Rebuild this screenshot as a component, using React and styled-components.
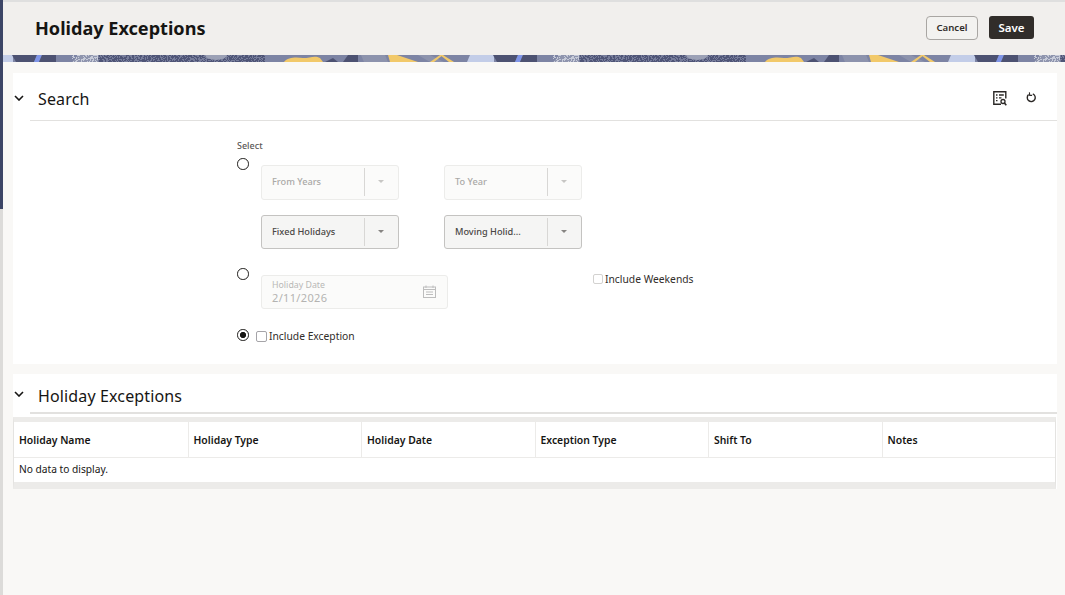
import React from 'react';
import styled, { createGlobalStyle } from 'styled-components';

const columns = ['Holiday Name', 'Holiday Type', 'Holiday Date', 'Exception Type', 'Shift To', 'Notes'];

// little speckled dots for the textured part of the banner
function speckles(from, to, color) {
    const dots = [];
    let seed = from + 7;
    for (let x = from; x < to; x++) {
        for (let y = 0; y < 7; y++) {
            seed = (seed * 1103515245 + 12345) % 2147483648;
            if (seed % 100 < 38) {
                dots.push(<rect key={x + '-' + y} x={x} y={y} width="1" height="1" fill={color} />);
            }
        }
    }
    return dots;
}

function Banner() {
    return (
        <BannerSvg height="7" width="100%">
            <defs>
                <pattern id="banner-tile" x="-3" y="0" width="481" height="7" patternUnits="userSpaceOnUse">
                    <rect width="481" height="7" fill="#7d84a4" />
                    <polygon points="470,0 481,0 481,7 467,7" fill="#c3cde8" />
                    <rect x="0" y="0" width="13" height="7" fill="#c3cde8" />
                    <polygon points="12,0 37,0 34,7 16,7" fill="#4d5272" />
                    <polygon points="37,0 42,0 39,7 34,7" fill="#7f95e8" />
                    <polygon points="42,0 56,0 56,7 39,7" fill="#4d5272" />
                    <polygon points="78,0 98,0 98,7 72,7" fill="#8f95ae" />
                    {speckles(72, 98, '#c6cad8')}
                    <rect x="98" y="0" width="167" height="7" fill="#4f5577" />
                    {speckles(98, 265, '#777d9b')}
                    <ellipse cx="216" cy="0" rx="11" ry="5" fill="#9ca1b6" />
                    <path d="M284 7 C288 2 296 2 303 3 C310 3 315 0 320 3 L323 7 Z" fill="#f2c96a" />
                    <polygon points="325,7 333,3 338,7" fill="#4d5272" />
                    <polygon points="343,7 348,0 358,0 358,7" fill="#4d5272" />
                    <polygon points="361,0 385,0 388,7 364,7" fill="#8d93ad" />
                    <polygon points="388,0 397,0 418,7 390,7" fill="#f2c96a" />
                    <polygon points="418,0 430,0 444,7 430,7" fill="#8d93ad" />
                    <polygon points="430,7 440,0 443,0 434,7" fill="#f2c96a" />
                    <polygon points="440,0 443,0 454,7 449,7" fill="#f2c96a" />
                </pattern>
            </defs>
            <rect width="100%" height="7" fill="url(#banner-tile)" />
        </BannerSvg>
    );
}

function Chevron() {
    return (
        <ChevronSvg viewBox="0 0 10 6" width="10" height="6">
            <path d="M1 1l4 4 4-4" fill="none" stroke="#161513" strokeWidth="1.6" />
        </ChevronSvg>
    );
}

function QueryIcon() {
    return (
        <svg viewBox="0 0 14 15" width="14" height="15">
            <path d="M8 13.2H0.8V0.8h12v6.7" fill="none" stroke="#2b2826" strokeWidth="1.4" />
            <path d="M3 4h1.5M6 4h4.8M3 6.8h1.5M6 6.8h2.5M3 9.6h1.5" stroke="#2b2826" strokeWidth="1.3" />
            <circle cx="10" cy="10.5" r="2" fill="none" stroke="#2b2826" strokeWidth="1.3" />
            <path d="M11.4 12l1.9 2.2" stroke="#2b2826" strokeWidth="1.6" />
        </svg>
    );
}

function ResetIcon() {
    return (
        <ResetSvg viewBox="0 0 11 11" width="11" height="11">
            <path d="M6.8 1.9A4 4 0 1 1 2.6 2.6" fill="none" stroke="#2b2826" strokeWidth="1.4" />
            <path d="M3.4 0.4l0.3 3h2.4" fill="none" stroke="#2b2826" strokeWidth="1.1" />
        </ResetSvg>
    );
}

function CalendarIcon() {
    return (
        <svg viewBox="0 0 13 13" width="13" height="13">
            <rect x="0.5" y="2" width="12" height="10.5" fill="none" stroke="#bdbdbd" />
            <path d="M0.5 4.5h12M3 0.5v2.5M10 0.5v2.5M3 7h7M3 9.5h7" stroke="#bdbdbd" />
        </svg>
    );
}

function Dropdown({ label, disabled }) {
    return (
        <SelectBox $disabled={disabled}>
            <SelectText>{label}</SelectText>
            <Caret />
        </SelectBox>
    );
}

function App() {
    return (
        <Page>
            <GlobalStyle />
            <Rail />
            <Main>
                <Header>
                    <PageTitle>Holiday Exceptions</PageTitle>
                    <Actions>
                        <CancelButton type="button">Cancel</CancelButton>
                        <SaveButton type="button">Save</SaveButton>
                    </Actions>
                </Header>
                <Banner />
                <Content>
                    <Card $height={291}>
                        <SectionHead>
                            <Chevron />
                            <SectionTitle>Search</SectionTitle>
                            <SectionTools>
                                <QueryIcon />
                                <ResetIcon />
                            </SectionTools>
                        </SectionHead>
                        <SearchForm>
                            <SelectLabel>Select</SelectLabel>
                            <FormRow>
                                <Radio type="radio" name="mode" />
                                <SelectGrid>
                                    <Dropdown label="From Years" disabled />
                                    <Dropdown label="To Year" disabled />
                                    <Dropdown label="Fixed Holidays" />
                                    <Dropdown label="Moving Holid..." />
                                </SelectGrid>
                            </FormRow>
                            <DateRow>
                                <Radio type="radio" name="mode" />
                                <DateField>
                                    <DateLabel>Holiday Date</DateLabel>
                                    <DateValue>2/11/2026</DateValue>
                                    <DateIcon><CalendarIcon /></DateIcon>
                                </DateField>
                                <WeekendLabel>
                                    <Checkbox type="checkbox" $faint />
                                    Include Weekends
                                </WeekendLabel>
                            </DateRow>
                            <ExceptionRow>
                                <Radio type="radio" name="mode" defaultChecked />
                                <ExceptionLabel>
                                    <Checkbox type="checkbox" />
                                    Include Exception
                                </ExceptionLabel>
                            </ExceptionRow>
                        </SearchForm>
                    </Card>
                    <Card>
                        <SectionHead $short>
                            <Chevron />
                            <SectionTitle>Holiday Exceptions</SectionTitle>
                        </SectionHead>
                        <Table>
                            <TableHead>
                                {columns.map((col) => <HeadCell key={col}>{col}</HeadCell>)}
                            </TableHead>
                            <EmptyRow>No data to display.</EmptyRow>
                        </Table>
                    </Card>
                </Content>
            </Main>
        </Page>
    );
}

const GlobalStyle = createGlobalStyle`
    html, body {
        margin: 0;
        padding: 0;
        background: #f9f8f6;
    }
    * {
        box-sizing: border-box;
    }
`;

const Page = styled.div`
    display: flex;
    width: 1065px;
    height: 595px;
    overflow: hidden;
    font-family: "Noto Sans", "Open Sans", sans-serif;
    color: #161513;
`;

const Rail = styled.div`
    width: 3px;
    flex: none;
    background: linear-gradient(to bottom, #3c4566 0, #3c4566 209px, #dcdbd9 209px, #dcdbd9 100%);
`;

const Main = styled.div`
    flex: 1;
    min-width: 0;
    display: flex;
    flex-direction: column;
`;

const Header = styled.header`
    height: 55px;
    display: flex;
    align-items: center;
    justify-content: space-between;
    padding: 0 31px 2px 32px;
    background: #f1efed;
    border-top: 2px solid #dfdfdf;
`;

const PageTitle = styled.h1`
    margin: 0;
    font-size: 18.1px;
    font-weight: 700;
`;

const Actions = styled.div`
    display: flex;
    align-items: center;
    gap: 11px;
`;

const CancelButton = styled.button`
    width: 52px;
    height: 24px;
    padding: 0;
    font-family: inherit;
    font-size: 9.6px;
    font-weight: 600;
    color: #312d2a;
    background: #f3f2f0;
    border: 1px solid #a9a6a3;
    border-radius: 4px;
`;

const SaveButton = styled.button`
    width: 45px;
    height: 23.5px;
    padding: 0;
    font-family: inherit;
    font-size: 11.5px;
    font-weight: 600;
    color: #fff;
    background: #312d2a;
    border: none;
    border-radius: 3px;
`;

const BannerSvg = styled.svg`
    display: block;
    flex: none;
`;

const Content = styled.main`
    display: flex;
    flex-direction: column;
    gap: 10px;
    padding: 11px 8px 0 10px;
`;

const Card = styled.section`
    background: #fff;
    height: ${(props) => (props.$height ? props.$height + 'px' : 'auto')};
`;

const SectionHead = styled.div`
    position: relative;
    display: flex;
    align-items: center;
    height: ${(props) => (props.$short ? '40px' : '48px')};
    padding-top: 3px;
    margin-left: 17px;
    border-bottom: ${(props) => (props.$short ? '2px' : '1px')} solid #e2e1df;
`;

const ChevronSvg = styled.svg`
    position: absolute;
    left: -16px;
    top: 50%;
    margin-top: -2px;
`;

const SectionTitle = styled.h2`
    margin: 2px 0 0 8px;
    font-size: 16px;
    font-weight: 400;
    letter-spacing: 0.14px;
`;

const SectionTools = styled.div`
    margin-left: auto;
    display: flex;
    align-items: center;
    gap: 19px;
    padding-right: 20px;
`;

const ResetSvg = styled.svg`
    margin-bottom: 2px;
`;

const SearchForm = styled.div`
    display: flex;
    flex-direction: column;
    padding: 18px 0 0 224px;
`;

const SelectLabel = styled.div`
    font-size: 9px;
    font-weight: 500;
    line-height: 13px;
    color: #5c5957;
    margin-bottom: 6px;
`;

const FormRow = styled.div`
    display: flex;
    align-items: flex-start;
`;

const Radio = styled.input`
    appearance: none;
    flex: none;
    width: 11.5px;
    height: 11.5px;
    margin: 0 12.5px 0 0;
    border: 1.6px solid #1f1d1b;
    border-radius: 50%;
    background: #fff;
    &:checked {
        background: radial-gradient(circle, #161513 0, #161513 2.8px, #fff 3.3px);
    }
`;

const SelectGrid = styled.div`
    display: grid;
    grid-template-columns: 137.5px 137.5px;
    column-gap: 45.5px;
    row-gap: 15px;
    padding-top: 7px;
`;

const SelectBox = styled.div`
    height: 34.5px;
    display: flex;
    align-items: center;
    background: ${(props) => (props.$disabled ? '#fbfbfa' : '#f5f5f4')};
    border: 1px solid ${(props) => (props.$disabled ? '#ececea' : '#c4c3c1')};
    border-radius: 3px;
    color: ${(props) => (props.$disabled ? '#aaa9a7' : '#4a4745')};
    font-weight: 500;
`;

const SelectText = styled.span`
    flex: 1;
    padding: 0 0 1px 10px;
    font-size: 9.2px;
    white-space: nowrap;
`;

const Caret = styled.span`
    position: relative;
    flex: none;
    width: 34px;
    height: 28px;
    border-left: 1px solid #d8d7d5;
    &::after {
        content: '';
        position: absolute;
        left: 13px;
        top: 12px;
        border-left: 3.5px solid transparent;
        border-right: 3.5px solid transparent;
        border-top: 3.5px solid currentColor;
        opacity: 0.65;
    }
`;

const DateRow = styled(FormRow)`
    margin-top: 19px;
`;

const DateField = styled.div`
    position: relative;
    width: 187px;
    height: 34px;
    margin-top: 7px;
    padding: 4px 0 0 10px;
    background: #fbfbfa;
    border: 1px solid #ececea;
    border-radius: 3px;
`;

const DateLabel = styled.div`
    font-size: 8.8px;
    line-height: 11px;
    color: #b9b8b6;
`;

const DateValue = styled.div`
    font-size: 11px;
    line-height: 14px;
    letter-spacing: 0.35px;
    color: #b4b3b1;
`;

const DateIcon = styled.span`
    position: absolute;
    right: 11px;
    top: 9px;
    line-height: 0;
`;

const Checkbox = styled.input`
    appearance: none;
    flex: none;
    width: ${(props) => (props.$faint ? '10px' : '11px')};
    height: ${(props) => (props.$faint ? '10px' : '11px')};
    margin: 0 2px 0 0;
    background: #fff;
    border: 1px solid ${(props) => (props.$faint ? '#d3d2d0' : '#a5a4a8')};
    border-radius: 2px;
`;

const WeekendLabel = styled.label`
    display: flex;
    align-items: center;
    margin: 4px 0 0 145px;
    font-size: 10.3px;
    line-height: 14px;
    color: #312d2a;
`;

const ExceptionRow = styled(FormRow)`
    margin-top: 20px;
`;

const ExceptionLabel = styled(WeekendLabel)`
    margin: 0 0 0 -5px;
`;

const Table = styled.div`
    margin: 3px 1px 0 0;
    border: 1px solid #e4e3e1;
    border-top-width: 5px;
    border-bottom-width: 7px;
    border-top-color: #ecebe9;
    border-bottom-color: #ecebe9;
`;

const TableHead = styled.div`
    display: grid;
    grid-template-columns: repeat(6, 1fr);
    height: 36px;
    border-bottom: 1px solid #ecebe9;
`;

const HeadCell = styled.div`
    display: flex;
    align-items: center;
    padding-left: 5px;
    font-size: 10.4px;
    font-weight: 600;
    border-left: 1px solid #ecebe9;
    &:first-child {
        border-left: none;
    }
`;

const EmptyRow = styled.div`
    height: 24px;
    padding-left: 5px;
    font-size: 10.2px;
    line-height: 23px;
`;

export default App;
